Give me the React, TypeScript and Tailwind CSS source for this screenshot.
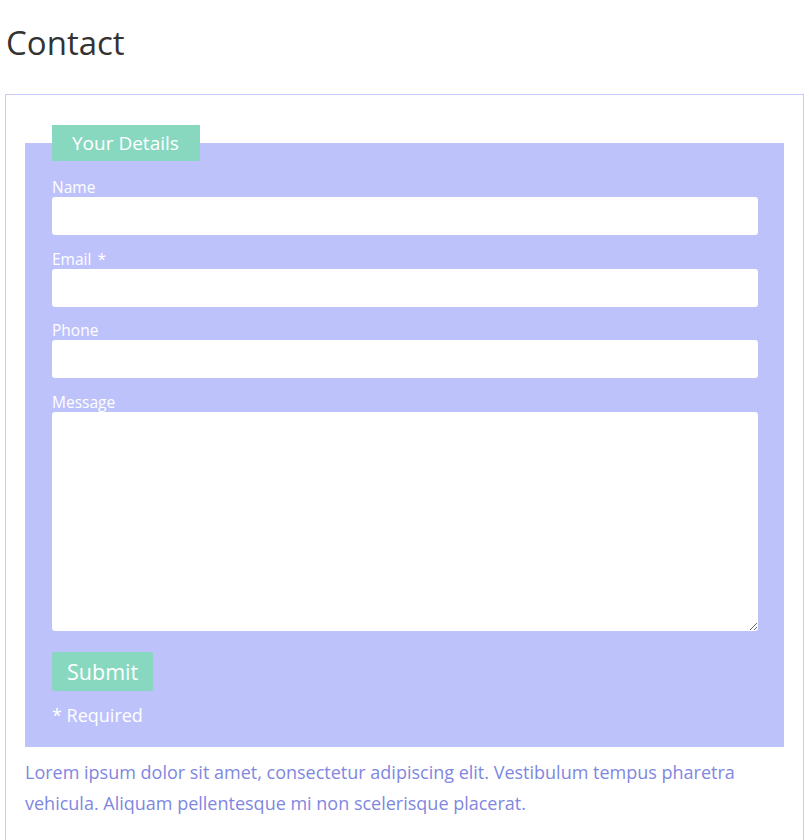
import React from 'react';

const font = { fontFamily: '"Open Sans", "Noto Sans", sans-serif' };

function Field({ label, required, tall }: { label: string; required?: boolean; tall?: boolean }) {
  return (
    <div className="mb-[14.5px]">
      <label className="block text-[15.5px] leading-[19px] text-white">
        {label}
        {required && <span className="ml-[6px]">*</span>}
      </label>
      {tall ? (
        <textarea className="block w-full h-[219px] rounded-[3px] bg-white border-0 outline-none resize-y" />
      ) : (
        <input type="text" className="block w-full h-[38px] rounded-[3px] bg-white border-0 outline-none" />
      )}
    </div>
  );
}

export default function App() {
  return (
    <div className="min-h-screen bg-white px-[5px]" style={font}>
      <h1 className="pl-px pt-[17px] pb-[26px] text-[33px] leading-[51px] text-[#333333]">Contact</h1>

      <div className="border border-[#c8cbff] px-[19px] pt-[30px] pb-8">
        <fieldset className="bg-[#bec2fb] pl-[27px] pr-[26px] pb-[22px]">
          <legend className="bg-[#88d8c0] pl-[20px] pr-[21px] h-[36px] text-[19px] leading-[36px] text-white">
            Your Details
          </legend>
          <div className="pt-[17px]">
            <Field label="Name" />
            <Field label="Email" required />
            <Field label="Phone" />
            <Field label="Message" tall />
          </div>
          <button className="mt-[7px] h-[39px] px-[15px] rounded-[2px] bg-[#88d8c0] text-[21.5px] leading-[39px] text-white">
            Submit
          </button>
          <p className="mt-[12px] mb-[-3px] text-[18px] leading-[25px] text-white">* Required</p>
        </fieldset>

        <p className="mt-[10px] text-[18px] leading-[31px] text-[#7f87e0]">
          Lorem ipsum dolor sit amet, consectetur adipiscing elit. Vestibulum tempus pharetra vehicula. Aliquam
          pellentesque mi non scelerisque placerat.
        </p>
      </div>
    </div>
  );
}
